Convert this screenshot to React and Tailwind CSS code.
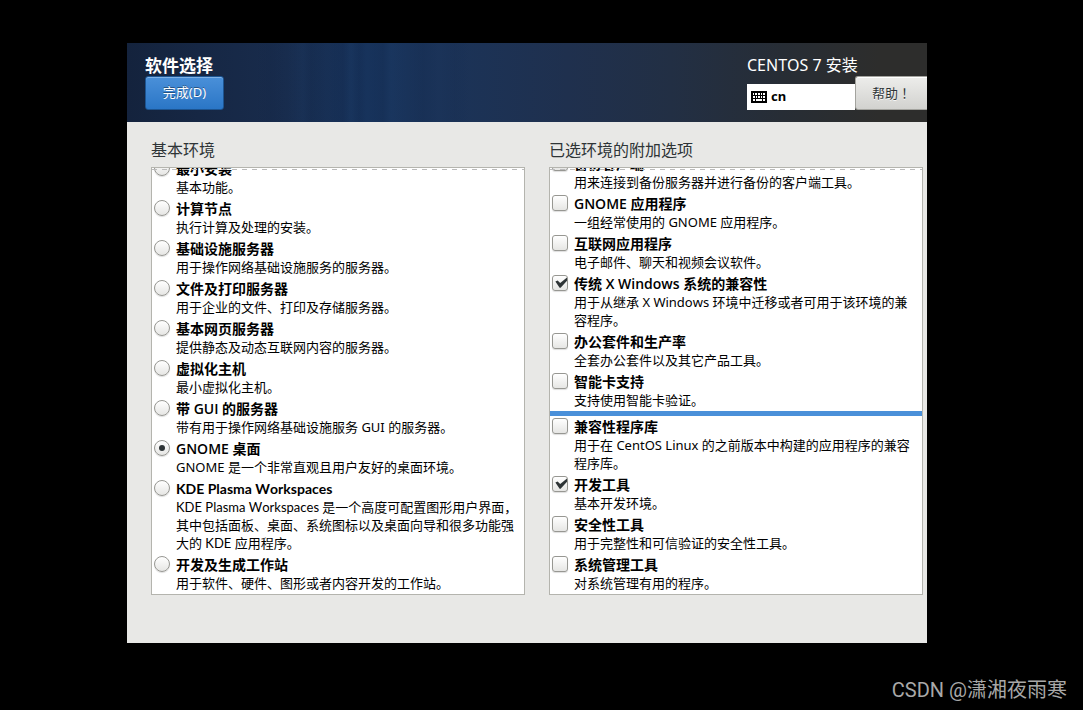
import React, { useState } from "react";

const environments = [
    { id: "minimal", name: "最小安装", desc: "基本功能。" },
    { id: "compute", name: "计算节点", desc: "执行计算及处理的安装。" },
    { id: "infra", name: "基础设施服务器", desc: "用于操作网络基础设施服务的服务器。" },
    { id: "file-print", name: "文件及打印服务器", desc: "用于企业的文件、打印及存储服务器。" },
    { id: "web", name: "基本网页服务器", desc: "提供静态及动态互联网内容的服务器。" },
    { id: "virt", name: "虚拟化主机", desc: "最小虚拟化主机。" },
    { id: "gui", name: "带 GUI 的服务器", desc: "带有用于操作网络基础设施服务 GUI 的服务器。" },
    { id: "gnome", name: "GNOME 桌面", desc: "GNOME 是一个非常直观且用户友好的桌面环境。" },
    { id: "kde", name: "KDE Plasma Workspaces", desc: "KDE Plasma Workspaces 是一个高度可配置图形用户界面，其中包括面板、桌面、系统图标以及桌面向导和很多功能强大的 KDE 应用程序。", narrow: true },
    { id: "devel", name: "开发及生成工作站", desc: "用于软件、硬件、图形或者内容开发的工作站。" },
];

// Add-ons tied to the selected environment
const envAddons = [
    { id: "backup", name: "备份客户端", desc: "用来连接到备份服务器并进行备份的客户端工具。" },
    { id: "gnome-apps", name: "GNOME 应用程序", desc: "一组经常使用的 GNOME 应用程序。" },
    { id: "internet", name: "互联网应用程序", desc: "电子邮件、聊天和视频会议软件。" },
    { id: "legacy-x", name: "传统 X Windows 系统的兼容性", desc: "用于从继承 X Windows 环境中迁移或者可用于该环境的兼容程序。" },
    { id: "office", name: "办公套件和生产率", desc: "全套办公套件以及其它产品工具。" },
    { id: "smartcard", name: "智能卡支持", desc: "支持使用智能卡验证。" },
];

// Add-ons available everywhere
const commonAddons = [
    { id: "compat", name: "兼容性程序库", desc: "用于在 CentOS Linux 的之前版本中构建的应用程序的兼容程序库。" },
    { id: "devtools", name: "开发工具", desc: "基本开发环境。" },
    { id: "security", name: "安全性工具", desc: "用于完整性和可信验证的安全性工具。" },
    { id: "sysadmin", name: "系统管理工具", desc: "对系统管理有用的程序。" },
];

const KeyboardIcon = () => (
    <svg width="16" height="12" viewBox="0 0 16 12" shapeRendering="crispEdges" aria-hidden="true">
        <rect width="16" height="12" fill="#000" />
        <path
            d="M2 3h1M4 3h2M7 3h2M10 3h1M12 3h2M2 6h2M5 6h1M7 6h2M10 6h1M12 6h2M2 9h2M5 9h6M12 9h2"
            stroke="#fff"
            strokeWidth="2"
        />
    </svg>
);

// Latin words in a title are set a little lighter than the Chinese around them
const Title = ({ text }) => (
    <span className="block text-sm leading-[18px] font-bold">
        {text.split(/([A-Za-z]+)/).map((part, i) =>
            i % 2 ? <span key={i} className="font-['Open_Sans',sans-serif] font-semibold">{part}</span> : part
        )}
    </span>
);

const Option = ({ type, name, item, checked, onChange }) => (
    <div className="flex shrink-0 items-start gap-1.5 py-0.5 pl-0.5 pr-1">
        <span className="grid size-4 shrink-0">
            <input
                type={type}
                id={item.id}
                name={name}
                checked={checked}
                onChange={onChange}
                className={
                    "col-start-1 row-start-1 size-4 appearance-none border border-[#979792] bg-linear-to-b from-white to-[#e6e6e4] shadow-[0_1px_1px_#00000022] " +
                    (type === "radio" ? "rounded-full" : "rounded-[3px]")
                }
            />
            {checked && (
                <svg className="pointer-events-none col-start-1 row-start-1" width="16" height="16" viewBox="0 0 16 16" aria-hidden="true">
                    {type === "radio" ? (
                        <circle cx="8" cy="8" r="3" fill="#2e3436" />
                    ) : (
                        <path d="M3.4 6.4 5.6 5.4 8.2 8 15 2.4v3.4L8.6 12.8H7.6Z" fill="#2e3436" />
                    )}
                </svg>
            )}
        </span>
        <label
            htmlFor={item.id}
            className={"min-w-0 text-[13px] leading-[18px] " + (item.narrow ? "font-['Lato','Noto_Sans_CJK_SC',sans-serif]" : "")}
        >
            {item.narrow ? <span className="block text-sm leading-[18px] font-bold">{item.name}</span> : <Title text={item.name} />}
            <span className="block">{item.desc}</span>
        </label>
    </div>
);

const OptionList = ({ title, children }) => (
    <section className="flex min-h-0 flex-col">
        <h2 className="mb-[5px] text-base leading-6 text-[#2e3436]">{title}</h2>
        <div className="relative flex min-h-0 flex-1 flex-col justify-end overflow-hidden border border-[#b4b4ae] bg-white">
            {children}
            <div className="absolute inset-x-0 top-px h-px bg-[repeating-linear-gradient(90deg,#bbb_0_5px,transparent_5px_10px)]" />
        </div>
    </section>
);

const App = () => {
    const [environment, setEnvironment] = useState("gnome");
    const [addons, setAddons] = useState(["legacy-x", "devtools"]);

    const toggleAddon = (id) => {
        setAddons((prev) => (prev.includes(id) ? prev.filter((a) => a !== id) : [...prev, id]));
    };

    const renderAddon = (item) => (
        <Option
            key={item.id}
            type="checkbox"
            name="addon"
            item={item}
            checked={addons.includes(item.id)}
            onChange={() => toggleAddon(item.id)}
        />
    );

    return (
        <div className="flex h-screen flex-col bg-black pt-[43px] font-['Noto_Sans','Noto_Sans_CJK_SC',sans-serif] text-black [font-kerning:none]">
            <main className="mr-[156px] ml-[127px] flex min-h-0 flex-1 flex-col bg-[#e8e8e6]">
                <header className="flex justify-between bg-[linear-gradient(90deg,transparent_16%,#0b204418_18%,transparent_20%,#2a5a9010_22%,#08183812_23%,transparent_25%,#08183818_27%,#2a5a9010_28%,#0818381c_29%,transparent_30%,#08183818_32%,#2a5a9010_33%,transparent_35%,#08183818_37%,transparent_39%,#08183810_41%,transparent_43%),linear-gradient(90deg,#14233d,#182b4b_18%,#17335c_30%,#1b3358_40%,#1f304e_55%,#222f44_68%,#272d35_82%,#2d2d2c_94%)] pt-3 pb-3 pl-[18px]">
                    <div>
                        <h1 className="text-[17px] leading-[21px] font-bold text-white">软件选择</h1>
                        <button className="h-[34px] w-[79px] rounded-[3px] border border-[#1c5491] bg-linear-to-b from-[#4a90d9] to-[#2a76c6] text-[13px] text-white shadow-[inset_0_1px_#7fb2e6] text-shadow-[0_-1px_#00000066]">
                            完成(D)
                        </button>
                    </div>
                    <div className="w-[180px]">
                        <p className="text-base leading-[21px] text-white">CENTOS 7 安装</p>
                        <div className="flex items-end">
                            <div className="flex h-[26px] flex-1 items-center gap-1 bg-white px-1 text-[13px] font-bold">
                                <KeyboardIcon />
                                cn
                            </div>
                            <button className="h-[34px] w-[72px] rounded-l-[3px] border border-r-0 border-[#a3a39e] bg-linear-to-b from-[#ededeb] to-[#d2d2cf] font-['Noto_Sans_CJK_TC',sans-serif] text-[13px] text-[#2e3436] shadow-[inset_0_1px_#fff] text-shadow-[0_1px_#ffffffcc]">
                                帮助！
                            </button>
                        </div>
                    </div>
                </header>

                <div className="grid min-h-0 flex-1 grid-cols-2 grid-rows-[minmax(0,1fr)] gap-6 pt-4 pr-1 pb-12 pl-6">
                    <OptionList title="基本环境">
                        {environments.map((item) => (
                            <Option
                                key={item.id}
                                type="radio"
                                name="environment"
                                item={item}
                                checked={environment === item.id}
                                onChange={() => setEnvironment(item.id)}
                            />
                        ))}
                    </OptionList>
                    <OptionList title="已选环境的附加选项">
                        {envAddons.map(renderAddon)}
                        <hr className="h-[5px] shrink-0 border-0 bg-[#4a90d9]" />
                        {commonAddons.map(renderAddon)}
                    </OptionList>
                </div>
            </main>

            <footer className="flex h-[67px] shrink-0 items-end justify-end pr-4 pb-2 text-xl leading-6 text-[#a8a8a8] font-['Roboto','Noto_Sans_CJK_SC',sans-serif]">
                CSDN @潇湘夜雨寒
            </footer>
        </div>
    );
};

export default App;
